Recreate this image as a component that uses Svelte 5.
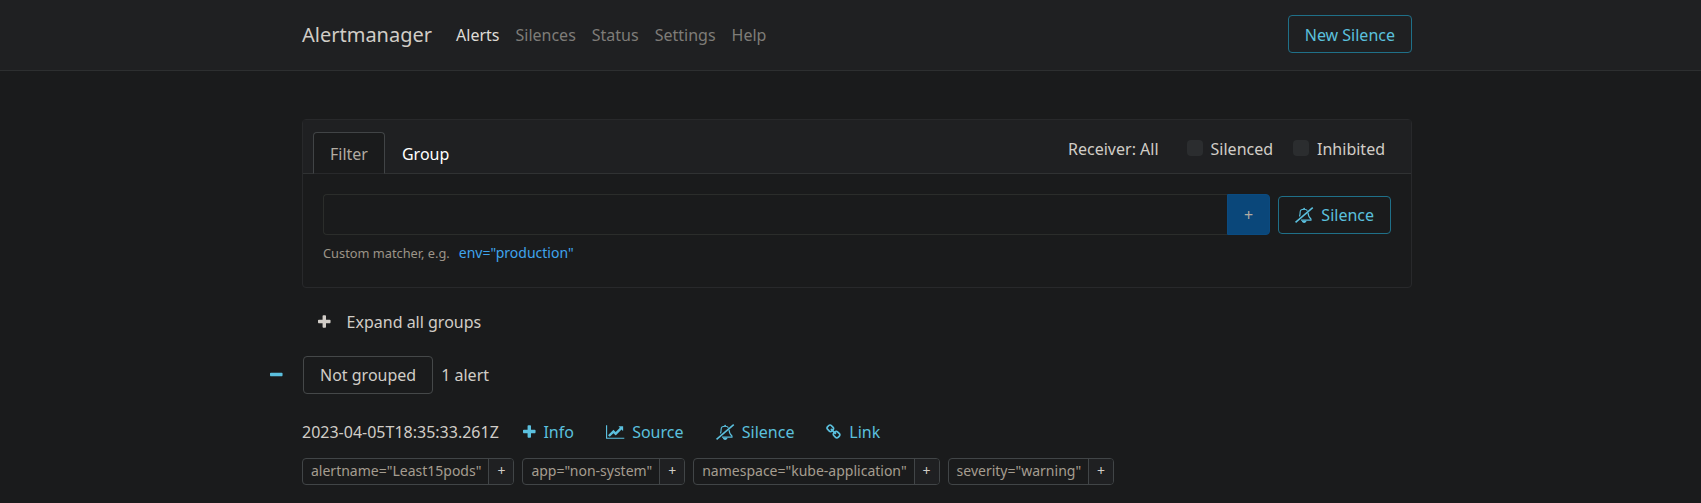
<script>
  const nav = ['Alerts', 'Silences', 'Status', 'Settings', 'Help'];
  const labels = ['alertname="Least15pods"', 'app="non-system"', 'namespace="kube-application"', 'severity="warning"'];
</script>

{#snippet icon(name)}
  {#if name === 'plus'}
    <svg class="icon narrow" viewBox="192 0 1408 1792"><path d="M1600 736v192q0 40-28 68t-68 28h-416v416q0 40-28 68t-68 28h-192q-40 0-68-28t-28-68v-416h-416q-40 0-68-28t-28-68v-192q0-40 28-68t68-28h416v-416q0-40 28-68t68-28h192q40 0 68 28t28 68v416h416q40 0 68 28t28 68z" /></svg>
  {:else if name === 'minus'}
    <svg class="icon narrow" viewBox="192 0 1408 1792"><path d="M1600 736v192q0 40-28 68t-68 28h-1216q-40 0-68-28t-28-68v-192q0-40 28-68t68-28h1216q40 0 68 28t28 68z" /></svg>
  {:else if name === 'chart'}
    <svg class="icon wide" viewBox="0 0 2048 1792"><path d="M2048 1536v128h-2048v-1536h128v1408h1920zm-128-1248v435q0 21-19.5 29.5t-35.5-7.5l-121-121-633 633q-10 10-23 10t-23-10l-233-233-416 416-192-192 585-585q10-10 23-10t23 10l233 233 464-464-121-121q-16-16-7.5-35.5t29.5-19.5h435q14 0 23 9t9 23z" /></svg>
  {:else if name === 'bell'}
    <svg class="icon wide" viewBox="0 0 2048 1792">
      <path class="line" d="M505 1060Q576 850 576 580C576 410 730 256 1024 256C1190 256 1320 310 1390 410M1460 650Q1490 1120 1790 1344V1472H670" />
      <path class="slash" d="M60 1725L1988 70" />
      <path d="M768 1536h512q0 106-75 181t-181 75t-181-75t-75-181zM928 190q0-96 96-96t96 96v100h-192z" />
    </svg>
  {:else}
    <svg class="icon link-icon" viewBox="64 0 1664 1792"><path d="M1520 1216q0-40-28-68l-208-208q-28-28-68-28-42 0-72 32 3 3 19 18.5t21.5 21.5 15 19 13 25.5 3.5 27.5q0 40-28 68t-68 28q-15 0-27.5-3.5t-25.5-13-19-15-21.5-21.5-18.5-19q-33 31-33 73 0 40 28 68l206 207q27 27 68 27 40 0 68-26l147-146q28-28 28-67zm-703-705q0-40-28-68l-206-207q-28-28-68-28-39 0-68 27l-147 146q-28 28-28 67 0 40 28 68l208 208q27 27 68 27 42 0 72-31-3-3-19-18.5t-21.5-21.5-15-19-13-25.5-3.5-27.5q0-40 28-68t68-28q15 0 27.5 3.5t25.5 13 19 15 21.5 21.5 18.5 19q33-31 33-73zm895 705q0 120-85 203l-147 146q-83 83-203 83-121 0-204-85l-206-207q-83-83-83-203 0-123 88-209l-88-88q-86 88-208 88-120 0-204-84l-208-208q-84-84-84-204t85-203l147-146q83-83 203-83 121 0 204 85l206 207q83 83 83 203 0 123-88 209l88 88q86-88 208-88 120 0 204 84l208 208q84 84 84 204z" /></svg>
  {/if}
{/snippet}

<header>
  <div class="container topbar">
    <a class="brand" href="#/">Alertmanager</a>
    <nav>
      {#each nav as item, i}<a class:active={i === 0} href="#/">{item}</a>{/each}
    </nav>
    <button class="btn info create">New Silence</button>
  </div>
</header>

<main class="container">
  <section class="card">
    <div class="card-header">
      <div class="tabs">
        <a class="tab selected" href="#/">Filter</a>
        <a class="tab" href="#/">Group</a>
      </div>
      <div class="options">
        <span class="receiver">Receiver: All</span>
        <span class="check"><i></i>Silenced</span>
        <span class="check"><i></i>Inhibited</span>
      </div>
    </div>
    <div class="card-body">
      <div class="filter">
        <div class="group">
          <input type="text" aria-label="Filter" />
          <button class="add">+</button>
        </div>
        <button class="btn info">{@render icon('bell')}<span>Silence</span></button>
      </div>
      <div class="hint"><small>Custom matcher, e.g.</small><a href="#/">env="production"</a></div>
    </div>
  </section>

  <button class="expand">{@render icon('plus')}<span>Expand all groups</span></button>

  <div class="group-row">
    <button class="collapse" aria-label="Collapse">{@render icon('minus')}</button>
    <span class="btn plain">Not grouped</span>
    <span>1 alert</span>
  </div>

  <div class="alert-row">
    <span class="time">2023-04-05T18:35:33.261Z</span>
    <a href="#/">{@render icon('plus')}<span>Info</span></a>
    <a href="#/">{@render icon('chart')}<span>Source</span></a>
    <a href="#/">{@render icon('bell')}<span>Silence</span></a>
    <a href="#/">{@render icon('link')}<span>Link</span></a>
  </div>

  <div class="labels">
    {#each labels as label}
      <div class="label"><span class="text">{label}</span><span class="more">+</span></div>
    {/each}
  </div>
</main>

<style>
  :global(body) {
    background: #1a1b1c;
    overflow: hidden;
    color: #d1cdc7;
    font: 16px/24px "Noto Sans", sans-serif;
  }
  :global(*) { box-sizing: border-box; }
  a { text-decoration: none; color: inherit; }
  button, input { font: inherit; margin: 0; }
  .container { width: 1110px; margin-left: 302px; }
  header { height: 71px; background: #1f2022; border-bottom: 1px solid #2d2f30; }
  .topbar { display: flex; align-items: center; height: 70px; }
  .brand { font-size: 20px; line-height: 30px; margin-right: 16px; }
  nav { display: flex; flex: 1; }
  nav a { padding: 8px; color: #7e7c78; }
  nav a.active { color: #dfdcd7; }
  .btn {
    display: inline-flex; align-items: center; height: 38px; padding: 0 16px;
    border: 1px solid; border-radius: 4px; background: transparent; white-space: nowrap;
  }
  .info { color: #5bc0de; border-color: #1f7089; }
  .create { margin-bottom: 2px; padding-top: 2px; }
  .icon { height: 16px; flex: none; fill: currentColor; overflow: visible; }
  .narrow { width: 12.57px; }
  .wide { width: 18.29px; }
  .link-icon { width: 14.86px; }
  .line { fill: none; stroke: currentColor; stroke-width: 128; }
  .slash { fill: none; stroke: currentColor; stroke-width: 175; }
  .card { margin-top: 48px; height: 169px; border: 1px solid #28292b; border-radius: 4px; }
  .card-header {
    display: flex; justify-content: space-between; height: 54px; padding: 12px 26px 0 10px;
    background: #1f2022; border-bottom: 1px solid #303233;
  }
  .tabs { display: flex; height: 42px; }
  .tab { padding: 9px 16px 7px; border: 1px solid transparent; color: #fff; }
  .tab.selected { color: #b2aca2; background: #1a1b1c; border-color: #414446; border-bottom-color: #28292b; border-radius: 4px 4px 0 0; }
  .options { display: flex; height: 34px; align-items: center; }
  .receiver { margin-right: 28px; }
  .check { display: flex; align-items: center; }
  .check + .check { margin-left: 20px; }
  .check i { width: 16px; height: 16px; margin: -3px 8px 0 0; border-radius: 4px; background: #2b2d2f; }
  .card-body { padding: 20px; }
  .filter { display: flex; align-items: center; gap: 8px; }
  .group { display: flex; flex: 1; height: 41px; }
  input { flex: 1; min-width: 0; background: transparent; border: 1px solid #2b2d2b; border-right: 0; border-radius: 4px 0 0 4px; }
  .add { width: 43px; padding: 0; border: 1px solid #0b4b80; background: #0a477a; color: #b2aca2; border-radius: 0 4px 4px 0; }
  .filter .btn { gap: 8px; }
  .hint { display: flex; align-items: baseline; gap: 9px; margin-top: 6px; color: #9c9488; }
  small { font-size: 12.8px; }
  .hint a { font-size: 14px; color: #3fa4ed; }
  .expand { display: flex; align-items: center; gap: 16px; height: 38px; margin-top: 15px; padding: 0 16px; border: 0; color: #d1cdc7; background: transparent; }
  .group-row { display: flex; align-items: center; gap: 8px; margin: 15px 0 0 -32px; }
  .collapse { display: flex; width: 25px; padding: 0; border: 0; background: transparent; color: #5bc0de; }
  .plain { border-color: #454849; }
  .alert-row { display: flex; align-items: center; height: 38px; margin-top: 19px; }
  .time { margin-right: 12px; }
  .alert-row a { display: flex; align-items: center; gap: 8px; padding: 0 12px; margin-right: 8px; color: #5bc0de; }
  .labels { display: flex; gap: 8px; margin-top: 7px; font-size: 14px; line-height: 21px; }
  .label { display: flex; height: 27px; border: 1px solid #414547; border-radius: 4px; overflow: hidden; color: #a59d90; }
  .text { padding: 1px 7px 0 8px; }
  .more { width: 25px; padding-top: 1px; text-align: center; border-left: 1px solid #414547; background: #1f2022; color: #d1cdc7; }
</style>
